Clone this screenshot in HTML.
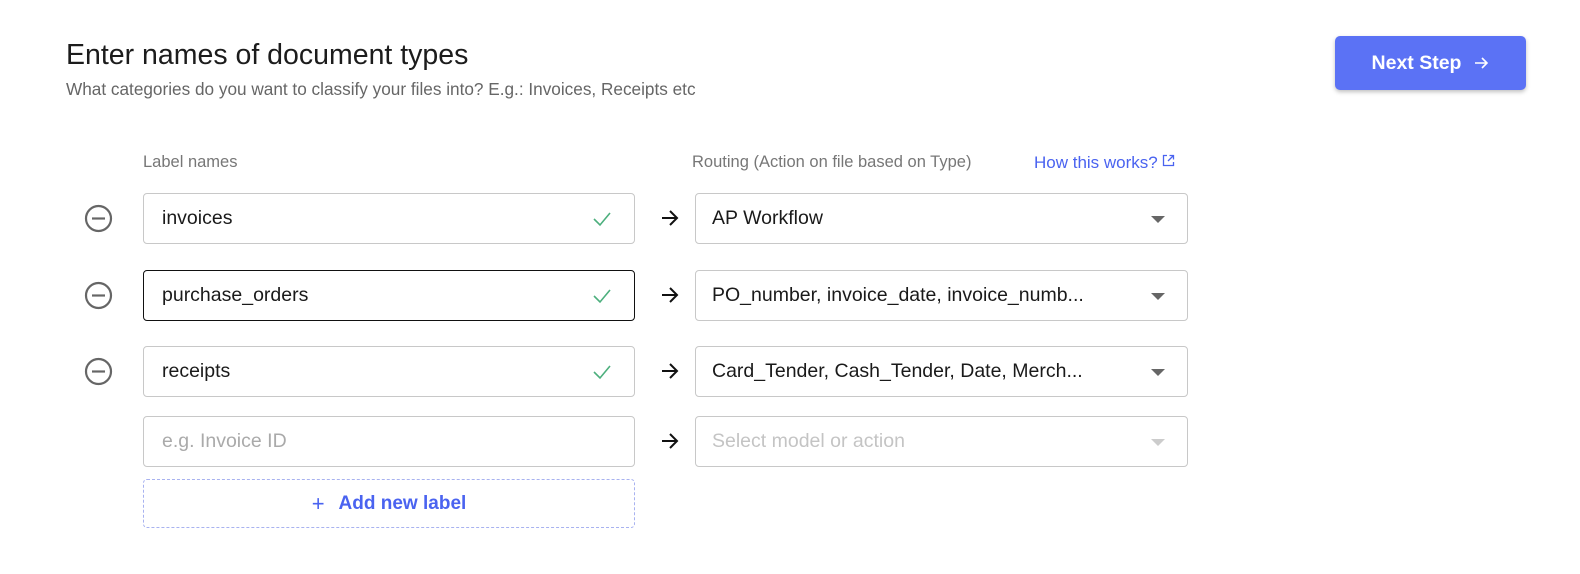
<!DOCTYPE html>
<html><head><meta charset="utf-8"><style>
*{box-sizing:border-box;margin:0;padding:0}
body{width:1580px;height:574px;background:#fff;font-family:"Liberation Sans",sans-serif;position:relative;overflow:hidden;color:#1a1a1a}
.abs{position:absolute}
h1{position:absolute;left:66px;top:39px;font-size:28.5px;font-weight:400;color:#1c1c1c}
.sub{left:66px;top:79px;font-size:17.2px;color:#666}
.btn{left:1335px;top:36px;width:191px;height:54px;background:#5b72f5;border-radius:5px;box-shadow:0 2px 4px rgba(0,0,0,.25);color:#fff;font-size:19.5px;font-weight:700;display:flex;align-items:center;justify-content:center;gap:12px}
.lab{font-size:16.5px;color:#777;top:153px}
.link{left:1034px;top:153px;font-size:17px;color:#4a63f0}
.in{left:143px;width:492px;height:51px;border:1px solid #c8c8c8;border-radius:4px;font-size:19.5px;padding-left:18px;display:flex;align-items:center}
.sel{left:695px;width:493px;height:51px;border:1px solid #c8c8c8;border-radius:4px;font-size:19.5px;padding-left:16px;display:flex;align-items:center}
.tri{position:absolute;right:22px;top:22px;width:0;height:0;border-left:7px solid transparent;border-right:7px solid transparent;border-top:7px solid #666}
.chk{position:absolute;right:22px;top:15px}
.arr{left:660px}
.minus{left:84px}
.add{left:143px;top:479px;width:492px;height:49px;border:1px dashed #a8b2f0;border-radius:4px;color:#4a63f0;font-size:19px;font-weight:700;display:flex;align-items:center;justify-content:center;gap:14px}
</style></head><body>
<h1>Enter names of document types</h1>
<div class="abs sub">What categories do you want to classify your files into? E.g.: Invoices, Receipts etc</div>
<div class="abs btn">Next Step <svg width="16" height="16" viewBox="0 0 16 16"><path d="M2 8h12M9 3l5 5-5 5" stroke="#fff" stroke-width="1.6" fill="none"/></svg></div>
<div class="abs lab" style="left:143px">Label names</div>
<div class="abs lab" style="left:692px">Routing (Action on file based on Type)</div>
<div class="abs link">How this works? <svg width="13" height="13" viewBox="0 0 13 13" style="vertical-align:1px"><path d="M5 1.5H1.5v10h10V8M7.5 1.5h4v4M11.5 1.5 6 7" stroke="#4a63f0" stroke-width="1.3" fill="none"/></svg></div>

<svg class="abs minus" style="top:204px" width="29" height="29" viewBox="0 0 29 29"><circle cx="14.5" cy="14.5" r="12.5" stroke="#666" stroke-width="2.2" fill="none"/><path d="M8 14.5h13" stroke="#666" stroke-width="2.2"/></svg>
<div class="abs in" style="top:193px">invoices<svg class="chk" width="20" height="20" viewBox="0 0 20 20"><path d="M2 10l6 6L18 4" stroke="#4caf7d" stroke-width="1.6" fill="none"/></svg></div>
<svg class="abs arr" style="top:208px" width="20" height="20" viewBox="0 0 20 20"><path d="M2 10h15M10 3l7 7-7 7" stroke="#111" stroke-width="2" fill="none"/></svg>
<div class="abs sel" style="top:193px">AP Workflow<div class="tri"></div></div>

<svg class="abs minus" style="top:281px" width="29" height="29" viewBox="0 0 29 29"><circle cx="14.5" cy="14.5" r="12.5" stroke="#666" stroke-width="2.2" fill="none"/><path d="M8 14.5h13" stroke="#666" stroke-width="2.2"/></svg>
<div class="abs in" style="top:270px;border-color:#111">purchase_orders<svg class="chk" width="20" height="20" viewBox="0 0 20 20"><path d="M2 10l6 6L18 4" stroke="#4caf7d" stroke-width="1.6" fill="none"/></svg></div>
<svg class="abs arr" style="top:285px" width="20" height="20" viewBox="0 0 20 20"><path d="M2 10h15M10 3l7 7-7 7" stroke="#111" stroke-width="2" fill="none"/></svg>
<div class="abs sel" style="top:270px">PO_number, invoice_date, invoice_numb...<div class="tri"></div></div>

<svg class="abs minus" style="top:357px" width="29" height="29" viewBox="0 0 29 29"><circle cx="14.5" cy="14.5" r="12.5" stroke="#666" stroke-width="2.2" fill="none"/><path d="M8 14.5h13" stroke="#666" stroke-width="2.2"/></svg>
<div class="abs in" style="top:346px">receipts<svg class="chk" width="20" height="20" viewBox="0 0 20 20"><path d="M2 10l6 6L18 4" stroke="#4caf7d" stroke-width="1.6" fill="none"/></svg></div>
<svg class="abs arr" style="top:361px" width="20" height="20" viewBox="0 0 20 20"><path d="M2 10h15M10 3l7 7-7 7" stroke="#111" stroke-width="2" fill="none"/></svg>
<div class="abs sel" style="top:346px">Card_Tender, Cash_Tender, Date, Merch...<div class="tri"></div></div>

<div class="abs in" style="top:416px;color:#aaa">e.g. Invoice ID</div>
<svg class="abs arr" style="top:431px" width="20" height="20" viewBox="0 0 20 20"><path d="M2 10h15M10 3l7 7-7 7" stroke="#111" stroke-width="2" fill="none"/></svg>
<div class="abs sel" style="top:416px;color:#c4c4c4">Select model or action<div class="tri" style="border-top-color:#ccc"></div></div>

<div class="abs add"><span style="font-weight:400;font-size:22px">+</span>Add new label</div>
</body></html>
